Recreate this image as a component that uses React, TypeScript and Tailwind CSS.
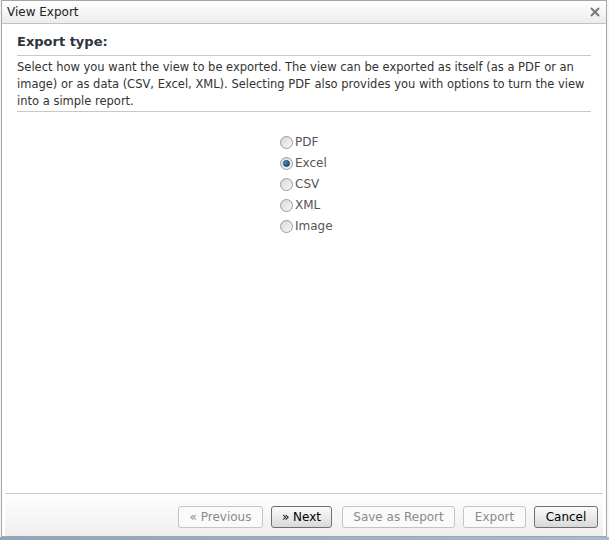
import React from 'react';

const options = ['PDF', 'Excel', 'CSV', 'XML', 'Image'];

function Radio({ checked }: { checked: boolean }) {
  return (
    <span className="w-[13px] h-[13px] rounded-full border border-[#9a9a9a] bg-gradient-to-br from-[#d8d8d8] to-[#f8f8f8] flex items-center justify-center">
      {checked && (
        <span className="w-[7px] h-[7px] rounded-full bg-gradient-to-br from-[#5fa2e0] to-[#0a3f80] border border-[#123a66]" />
      )}
    </span>
  );
}

function FooterButton({ label, enabled, w }: { label: string; enabled?: boolean; w: string }) {
  return (
    <button
      className={
        enabled
          ? `${w} h-[22px] rounded-[3px] border border-[#6f6f6f] bg-gradient-to-b from-[#fbfbfb] to-[#d9d9d9] text-[12px] text-black`
          : `${w} h-[22px] rounded-[3px] border border-[#c4c4c4] bg-[#fafafa] text-[12px] text-[#8a8a8a]`
      }
    >
      {label}
    </button>
  );
}

export default function App() {
  return (
    <div className="w-[609px] h-[540px] bg-[#f6f6f6] flex flex-col overflow-hidden" style={{ fontFamily: '"DejaVu Sans", sans-serif' }}>
      <div className="ml-[1px] w-[606px] h-[537px] border border-[#a5a5a5] bg-white flex flex-col">
        {/* Title bar */}
        <div className="h-[23px] flex-shrink-0 border-b border-[#c2c2c2] bg-gradient-to-b from-[#ffffff] to-[#ececec] flex items-center justify-between pl-[5px] pr-[5px]">
          <span className="text-[12px] text-[#222]">View Export</span>
          <svg width="10" height="10" viewBox="0 0 10 10" className="mr-[1px]">
            <path d="M1 1 L9 9 M9 1 L1 9" stroke="#7a7a7a" strokeWidth="2" />
          </svg>
        </div>

        {/* Content */}
        <div className="flex-1 px-[15px]">
          <div className="pt-[8px] pb-[3px] border-b border-[#c8c8c8] text-[13px] font-bold text-[#2e3440]">
            Export type:
          </div>
          <div className="pt-[3px] pb-[1px] border-b border-[#c8c8c8] text-[11.5px] leading-[17px] text-[#333]">
            Select how you want the view to be exported. The view can be exported as itself (as a PDF or an
            <br />
            image) or as data (CSV, Excel, XML). Selecting PDF also provides you with options to turn the view
            <br />
            into a simple report.
          </div>
          <div className="pt-[23px] flex flex-col items-start gap-[6px] pl-[263px]">
            {options.map((o) => (
              <label key={o} className="flex items-center gap-[2px] h-[15px] text-[12px] text-[#555]">
                <Radio checked={o === 'Excel'} />
                <span>{o}</span>
              </label>
            ))}
          </div>
        </div>

        {/* Footer */}
        <div className="mx-[3px] h-[43px] flex-shrink-0 border-t border-[#c8c8c8] bg-gradient-to-b from-[#ffffff] to-[#eeeeee] flex items-center justify-end pr-[5px] pt-[3px]">
          <FooterButton label="« Previous" w="w-[85px]" />
          <span className="w-[8px]" />
          <FooterButton label="» Next" w="w-[61px]" enabled />
          <span className="w-[10px]" />
          <FooterButton label="Save as Report" w="w-[113px]" />
          <span className="w-[8px]" />
          <FooterButton label="Export" w="w-[63px]" />
          <span className="w-[8px]" />
          <FooterButton label="Cancel" w="w-[64px]" enabled />
        </div>
      </div>
      <div className="flex-1 bg-gradient-to-r from-[#8fa3ba] to-[#a9bacd]" />
    </div>
  );
}
